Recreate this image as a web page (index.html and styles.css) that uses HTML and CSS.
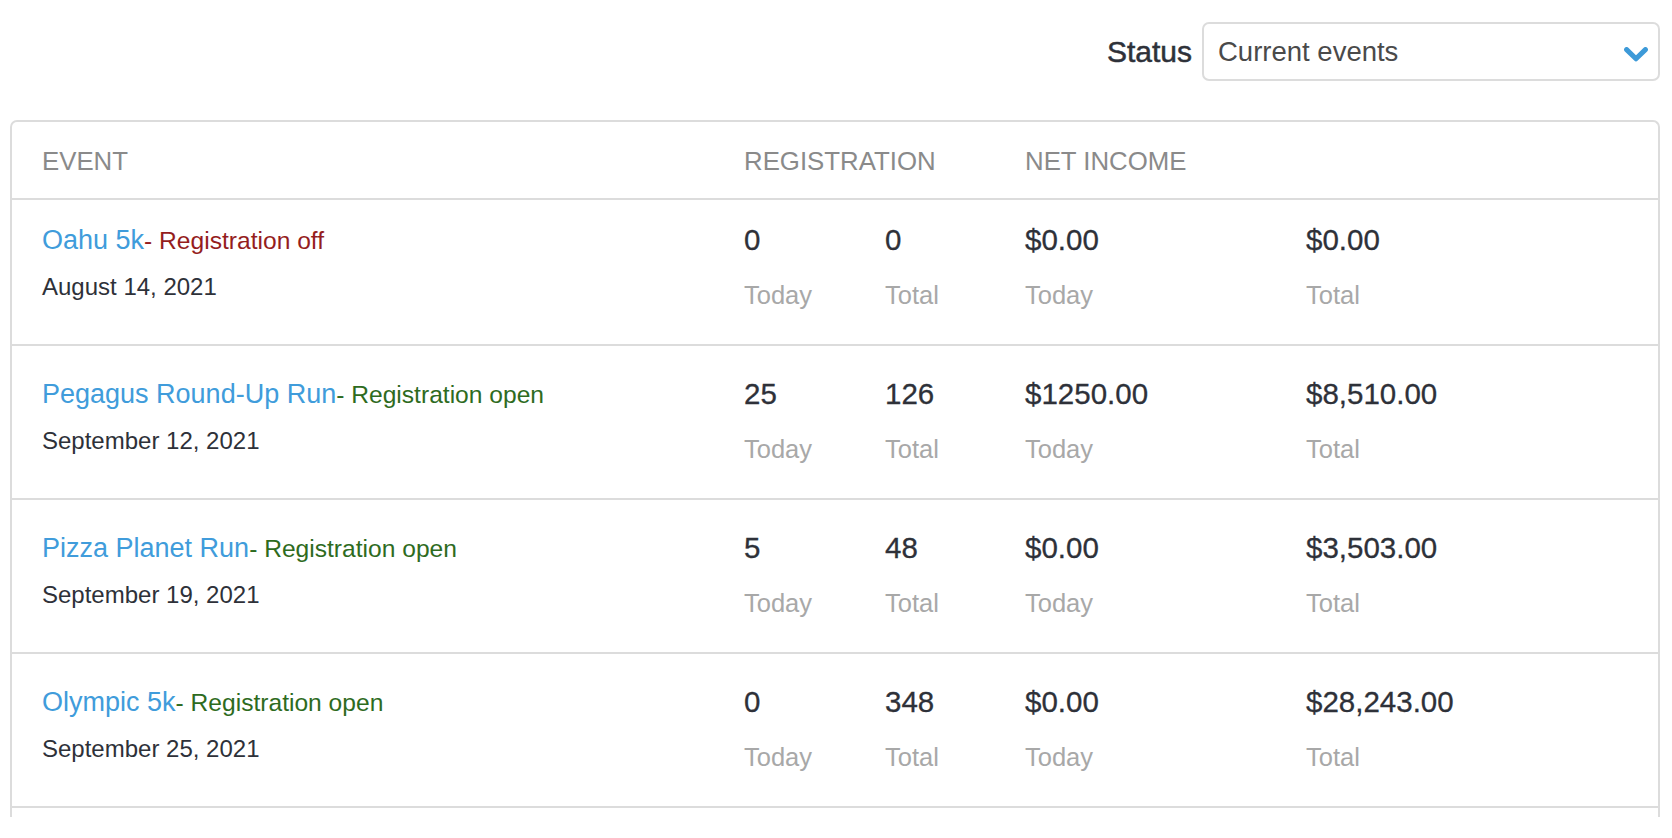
FILE: index.html
```html
<!DOCTYPE html>
<html lang="en">
<head>
<meta charset="utf-8">
<title>Events</title>
<link rel="stylesheet" href="styles.css">
</head>
<body>
<div class="page">
  <div class="toolbar">
    <span class="status-label">Status</span>
    <div class="select">
      <span class="select-value">Current events</span>
      <svg class="chevron" viewBox="0 0 24 15" aria-hidden="true"><polyline points="2.6,2.6 12,11.8 21.4,2.6" fill="none" stroke="#3d9ad8" stroke-width="5" stroke-linecap="round" stroke-linejoin="round"/></svg>
    </div>
  </div>

  <div class="card">
    <div class="row head">
      <div class="cell">EVENT</div>
      <div class="cell span2">REGISTRATION</div>
      <div class="cell span2">NET INCOME</div>
    </div>

    <div class="row body first">
      <div class="cell">
        <div class="title"><a class="name">Oahu 5k</a><span class="state off">- Registration off</span></div>
        <div class="date">August 14, 2021</div>
      </div>
      <div class="cell"><div class="num">0</div><div class="label">Today</div></div>
      <div class="cell"><div class="num">0</div><div class="label">Total</div></div>
      <div class="cell"><div class="num">$0.00</div><div class="label">Today</div></div>
      <div class="cell"><div class="num">$0.00</div><div class="label">Total</div></div>
    </div>

    <div class="row body">
      <div class="cell">
        <div class="title"><a class="name">Pegagus Round-Up Run</a><span class="state open">- Registration open</span></div>
        <div class="date">September 12, 2021</div>
      </div>
      <div class="cell"><div class="num">25</div><div class="label">Today</div></div>
      <div class="cell"><div class="num">126</div><div class="label">Total</div></div>
      <div class="cell"><div class="num">$1250.00</div><div class="label">Today</div></div>
      <div class="cell"><div class="num">$8,510.00</div><div class="label">Total</div></div>
    </div>

    <div class="row body">
      <div class="cell">
        <div class="title"><a class="name">Pizza Planet Run</a><span class="state open">- Registration open</span></div>
        <div class="date">September 19, 2021</div>
      </div>
      <div class="cell"><div class="num">5</div><div class="label">Today</div></div>
      <div class="cell"><div class="num">48</div><div class="label">Total</div></div>
      <div class="cell"><div class="num">$0.00</div><div class="label">Today</div></div>
      <div class="cell"><div class="num">$3,503.00</div><div class="label">Total</div></div>
    </div>

    <div class="row body">
      <div class="cell">
        <div class="title"><a class="name">Olympic 5k</a><span class="state open">- Registration open</span></div>
        <div class="date">September 25, 2021</div>
      </div>
      <div class="cell"><div class="num">0</div><div class="label">Today</div></div>
      <div class="cell"><div class="num">348</div><div class="label">Total</div></div>
      <div class="cell"><div class="num">$0.00</div><div class="label">Today</div></div>
      <div class="cell"><div class="num">$28,243.00</div><div class="label">Total</div></div>
    </div>
  </div>
</div>
</body>
</html>
```

FILE: styles.css
```css
html, body {
  margin: 0;
  padding: 0;
  background: #ffffff;
}

body {
  font-family: "Liberation Sans", Arial, sans-serif;
  color: #2e3139;
  overflow: hidden;
}

.page {
  padding: 22px 12px 0 10px;
}

.toolbar {
  display: flex;
  justify-content: flex-end;
  align-items: center;
  gap: 10px;
  height: 59px;
}

.status-label {
  font-size: 30px;
  line-height: 59px;
  color: #2e3139;
  -webkit-text-stroke: 0.5px #2e3139;
}

.select {
  box-sizing: border-box;
  width: 458px;
  height: 59px;
  border: 2px solid #dcdcdc;
  border-radius: 7px;
  display: flex;
  align-items: center;
  justify-content: space-between;
  padding: 0 10px 0 14px;
}

.select-value {
  font-size: 27.5px;
  line-height: 30px;
  color: #4a4a4a;
}

.chevron {
  width: 24px;
  height: 15px;
  margin-top: 5px;
}

.card {
  box-sizing: border-box;
  margin-top: 39px;
  height: 697px;
  border: 2px solid #dcdcdc;
  border-bottom: none;
  border-radius: 7px 7px 0 0;
}

.row {
  display: grid;
  grid-template-columns: 702px 141px 140px 281px 1fr;
  border-bottom: 2px solid #dcdcdc;
}

.cell {
  padding-left: 30px;
}

.span2 {
  grid-column: span 2;
}

.head .cell {
  padding-top: 24px;
  padding-bottom: 22px;
  font-size: 25.8px;
  line-height: 30px;
  color: #8a8a8a;
}

.body .cell {
  padding-top: 28px;
  padding-bottom: 32px;
}

.body.first .cell {
  padding-top: 20px;
}

.title {
  margin-top: 2px;
  font-size: 27px;
  line-height: 36px;
  white-space: nowrap;
}

.name {
  color: #409cdb;
  text-decoration: none;
}

.state {
  font-size: 24.6px;
}

.state.off {
  color: #951d1d;
}

.state.open {
  color: #2e6b1e;
}

.date {
  margin-top: 11px;
  font-size: 24px;
  line-height: 34px;
  color: #2e3139;
}

.num {
  font-size: 29.5px;
  line-height: 40px;
  color: #2e3139;
  -webkit-text-stroke: 0.3px #2e3139;
  white-space: nowrap;
}

.label {
  margin-top: 18px;
  font-size: 25.5px;
  line-height: 34px;
  color: #a8a8a8;
}
```
